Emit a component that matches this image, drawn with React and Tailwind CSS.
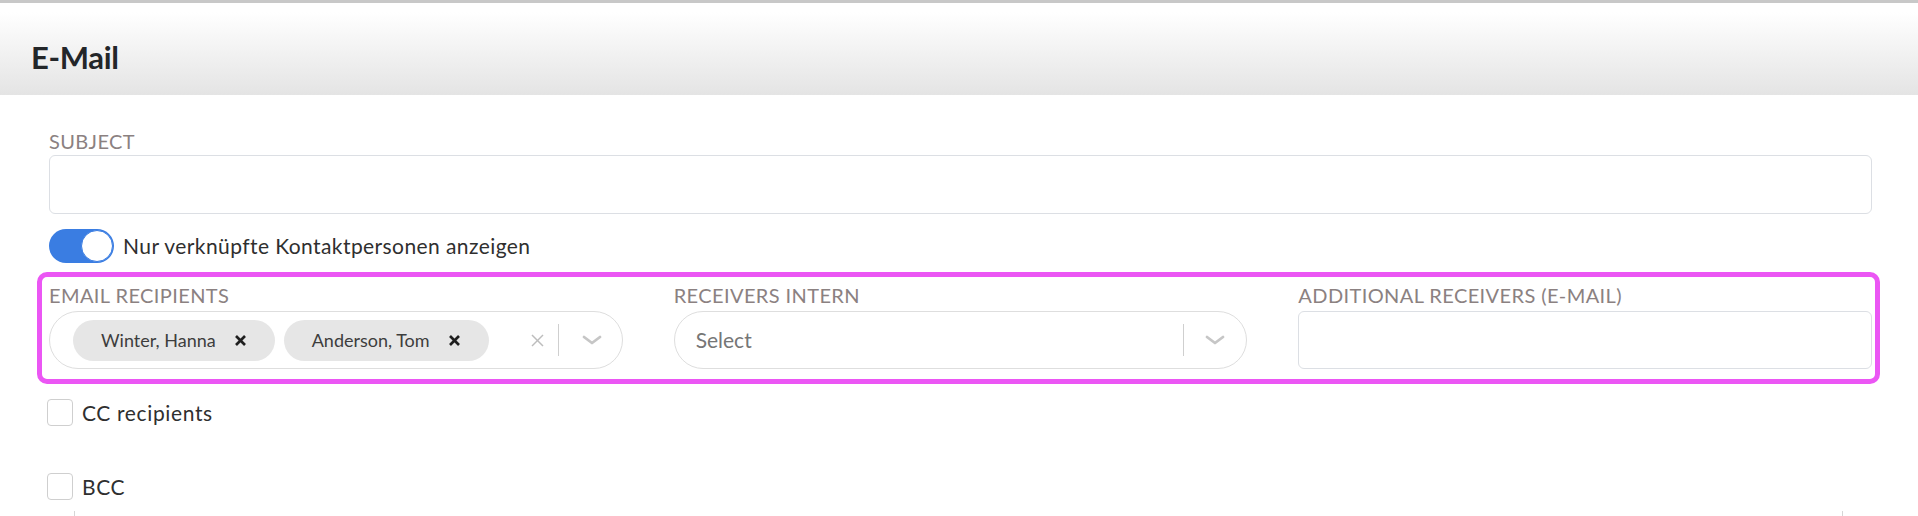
import React from "react";

const labelCls = "block text-[20px] leading-none tracking-[0.02em] uppercase text-[#8b8181]";

function Chevron() {
  return (
    <svg width="20" height="10" viewBox="0 0 20 10" fill="none" stroke="#c6c6c6" strokeWidth="2.8" strokeLinecap="round" strokeLinejoin="round">
      <polyline points="2,2 10,8 18,2" />
    </svg>
  );
}

function ClearX() {
  return (
    <svg width="13" height="13" viewBox="0 0 13 13" fill="none" stroke="#bdbdbd" strokeWidth="1.5">
      <line x1="1" y1="1" x2="12" y2="12" />
      <line x1="12" y1="1" x2="1" y2="12" />
    </svg>
  );
}

function Chip({ name }) {
  return (
    <div className="flex items-center h-[41px] rounded-full bg-[#e6e6e6] pl-[28px] pr-[29px] gap-[19px]">
      <span className="text-[18px] text-[#3d3d3d]">{name}</span>
      <svg width="11" height="11" viewBox="0 0 11 11" fill="none" stroke="#1f1f1f" strokeWidth="2.6">
        <line x1="1" y1="1" x2="10" y2="10" />
        <line x1="10" y1="1" x2="1" y2="10" />
      </svg>
    </div>
  );
}

function Checkbox({ label }) {
  return (
    <div className="flex items-center gap-[9px] -ml-[2px]">
      <div className="w-[26px] h-[27px] rounded-[4px] border border-[#cfcfcf] bg-white" />
      <span className="text-[21px] leading-none tracking-[0.03em] text-[#2f2f2f]">{label}</span>
    </div>
  );
}

export default function App() {
  return (
    <div className="w-[1918px] h-[516px] overflow-hidden bg-white font-['Lato',sans-serif]">
      <div className="h-[3px] bg-[#c8c8c8]" />
      <div className="h-[92px] flex items-center pl-[31px] pt-[17px] bg-linear-to-b from-white from-10% to-[#e4e4e4]">
        <h1 className="text-[31px] font-bold tracking-[-0.01em] text-[#232629] leading-none">E-Mail</h1>
      </div>

      <div className="pl-[49px] pr-[46px]">
        <label className={labelCls + " mt-[36px]"}>Subject</label>
        <div className="mt-[4px] h-[59px] rounded-[6px] border border-[#dcdfe4] bg-white" />

        <div className="mt-[15px] flex items-center gap-[9px]">
          <div className="w-[65px] h-[34px] rounded-full bg-[#3a7de2] flex items-center justify-end pr-[1px]">
            <div className="w-[32px] h-[32px] rounded-full bg-white border border-[#3a7de2]" />
          </div>
          <span className="text-[21px] tracking-[0.02em] text-[#2f2f2f]">Nur verknüpfte Kontaktpersonen anzeigen</span>
        </div>

        <div className="mt-[9px] -ml-[12px] -mr-[8px] border-[5px] border-[#eb56f4] rounded-[10px] pl-[7px] pr-[3px] pt-[8px] pb-[10px]">
          <div className="grid grid-cols-3 gap-x-[51px]">
            <div>
              <label className={labelCls}>Email recipients</label>
              <div className="mt-[6px] h-[58px] rounded-full border border-[#dedede] flex items-center pl-[23px] pr-[20px]">
                <div className="flex items-center gap-[9px] flex-1">
                  <Chip name="Winter, Hanna" />
                  <Chip name="Anderson, Tom" />
                </div>
                <ClearX />
                <div className="w-px h-[32px] bg-[#cfcfcf] ml-[14px] mr-[23px]" />
                <Chevron />
              </div>
            </div>
            <div>
              <label className={labelCls}>Receivers intern</label>
              <div className="mt-[6px] h-[58px] rounded-full border border-[#dedede] flex items-center pl-[21px] pr-[21px]">
                <span className="flex-1 text-[21px] text-[#767676]">Select</span>
                <div className="w-px h-[32px] bg-[#cfcfcf] mr-[21px]" />
                <Chevron />
              </div>
            </div>
            <div>
              <label className={labelCls}>Additional receivers (E-Mail)</label>
              <div className="mt-[6px] h-[58px] rounded-[6px] border border-[#dcdfe4] bg-white" />
            </div>
          </div>
        </div>

        <div className="mt-[15px]">
          <Checkbox label="CC recipients" />
        </div>
        <div className="mt-[47px]">
          <Checkbox label="BCC" />
        </div>

        <div className="mt-[11px] ml-[25px] mr-[29px] h-[20px] border-x border-[#d6d6d6]" />
      </div>
    </div>
  );
}
